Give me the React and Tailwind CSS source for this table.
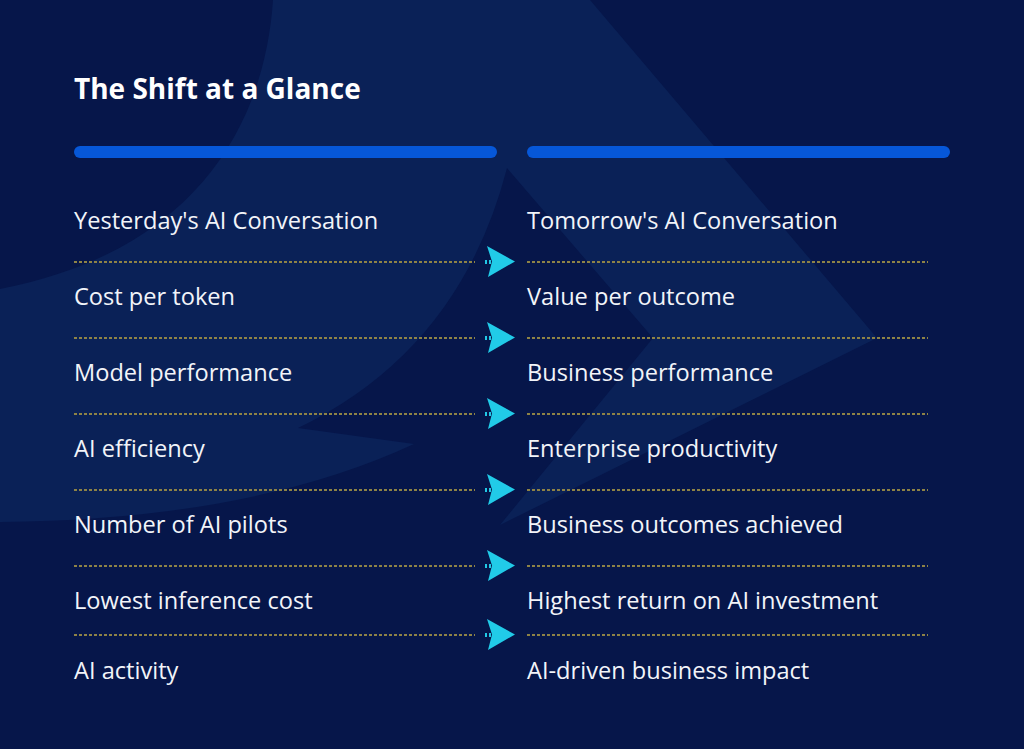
import React from 'react';

const rows = [
  ["Yesterday's AI Conversation", "Tomorrow's AI Conversation"],
  ['Cost per token', 'Value per outcome'],
  ['Model performance', 'Business performance'],
  ['AI efficiency', 'Enterprise productivity'],
  ['Number of AI pilots', 'Business outcomes achieved'],
  ['Lowest inference cost', 'Highest return on AI investment'],
  ['AI activity', 'AI-driven business impact'],
];

function Backdrop() {
  return (
    <svg className="absolute inset-0 h-full w-full" viewBox="0 0 1024 749" preserveAspectRatio="none">
      <path
        fill="#0a2157"
        d="M273 0 L590 0 L877 338 L500 525 L653 338 L507 168 Q460 350 298 428 L414 444 Q250 520 0 522 L0 289 C200 250 265 120 273 0 Z"
      />
    </svg>
  );
}

function Dots() {
  return (
    <div className="mt-[16px] h-[2px] w-[401px] self-start bg-[repeating-linear-gradient(90deg,#8e8346_0px,#8e8346_3px,#06164a00_3px,#06164a00_5px)]" />
  );
}

function Arrow() {
  return (
    <div className="flex h-[32px] w-[52px] items-center">
      <div className="ml-[10px] mt-[1px] flex gap-[2px]">
        <span className="h-[4px] w-[2px] bg-[#22c8e6]" />
        <span className="h-[4px] w-[2px] bg-[#22c8e6]" />
      </div>
      <svg width="30" height="32" viewBox="0 0 30 32" className="-ml-[4px]">
        <path d="M0 1 L28 16.5 L1 32 L5 16.5 Z" fill="#21cbe8" />
      </svg>
    </div>
  );
}

function Separator({ last }) {
  return (
    <div className={`${last ? 'mt-[3px] mb-[5px]' : 'mt-[10px] mb-[4px]'} flex h-[32px]`}>
      <Dots />
      <Arrow />
      <Dots />
    </div>
  );
}

export default function App() {
  return (
    <div className="relative h-[749px] w-[1024px] overflow-hidden bg-[#06164a] font-['Open_Sans',sans-serif] text-[#f2f4f9]">
      <Backdrop />
      <div className="relative pl-[74px] pt-[71px]">
        <h1 className="text-[28px] leading-[34px] font-bold text-white">The Shift at a Glance</h1>

        <div className="mt-[41px] flex gap-[30px]">
          <div className="h-[12px] w-[423px] rounded-full bg-[#0657d8]" />
          <div className="h-[12px] w-[423px] rounded-full bg-[#0657d8]" />
        </div>

        <div className="mt-[47px]">
          {rows.map(([left, right], i) => (
            <div key={left}>
              <div className="flex h-[30px] items-center text-[23.6px] leading-[30px]">
                <span className="w-[453px]">{left}</span>
                <span>{right}</span>
              </div>
              {i < rows.length - 1 && <Separator last={i === rows.length - 2} />}
            </div>
          ))}
        </div>
      </div>
    </div>
  );
}
